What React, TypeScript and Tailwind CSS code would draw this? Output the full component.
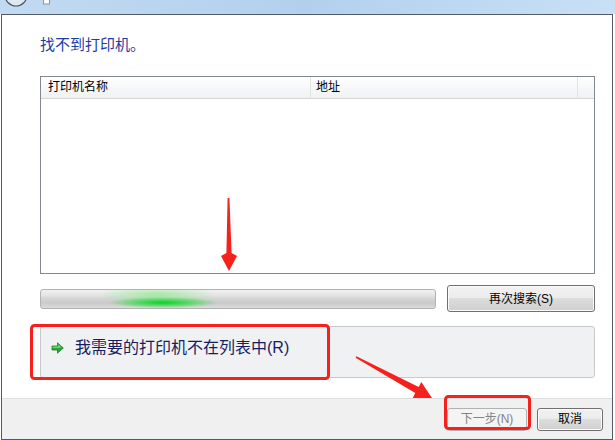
export default function App() {
  const btn =
    "rounded-[3px] border border-[#707070] bg-[linear-gradient(#f2f2f2_0%,#ebebeb_50%,#dddddd_50%,#cfcfcf_100%)] shadow-[inset_0_0_0_1px_#fbfbfb] text-[12px] leading-none text-black flex items-center justify-center";

  return (
    <div className="relative w-[615px] h-[440px] overflow-hidden bg-white font-['Liberation_Sans','Noto_Sans_CJK_SC',sans-serif]">
      {/* title bar */}
      <div className="relative h-[14px] bg-gradient-to-r from-[#c2daf1] via-[#b2d0ee] to-[#c8e0f6]">
        <svg className="absolute left-0 top-0" width="60" height="14" viewBox="0 0 60 14">
          <circle cx="16" cy="-5" r="11" fill="#dfe9f4" stroke="#4f5662" strokeWidth="1.2" />
          <rect x="43.5" y="-2" width="6" height="6" fill="#ffffff" stroke="#8a96a4" strokeWidth="1" />
        </svg>
      </div>

      {/* window */}
      <div className="ml-[1px] w-[612px] h-[426px] border border-[#525c68] flex flex-col">
        <div className="flex-1 bg-white pl-[38px] pr-[17px] pt-[20px]">
          <h1 className="text-[15px] leading-[20px] text-[#1c3ca4]">找不到打印机。</h1>

          {/* printer list */}
          <div className="mt-[21px] h-[198px] border border-[#828790] bg-white">
            <div className="flex h-[22px] border-b border-[#d5d5d5] bg-gradient-to-b from-white to-[#f0f1f3] text-[12px] leading-[21px] text-black">
              <div className="w-[270px] border-r border-[#e2e3e5] pl-[7px]">打印机名称</div>
              <div className="w-[267px] border-r border-[#e2e3e5] pl-[5px]">地址</div>
              <div className="flex-1" />
            </div>
          </div>

          {/* progress + search again */}
          <div className="mt-[11px] flex items-center h-[27px]">
            <div className="w-[396px] h-[20px] flex rounded-[3px] border border-[#b2b2b2] bg-[linear-gradient(#f1f1f1_0%,#e4e4e4_30%,#d6d6d6_45%,#cacaca_72%,#dcdcdc_100%)]">
              <div className="ml-[62px] w-[120px] h-full bg-[radial-gradient(ellipse_46%_32%_at_50%_70%,rgba(10,210,40,1)_0%,rgba(40,220,60,0.6)_55%,rgba(60,230,80,0)_100%),radial-gradient(ellipse_50%_50%_at_45%_25%,rgba(120,235,120,0.6)_0%,rgba(150,240,150,0)_100%)]" />
            </div>
            <button className={`ml-[11px] flex-1 h-[27px] ${btn}`}>再次搜索(S)</button>
          </div>

          {/* command link */}
          <div className="mt-[14px] h-[52px] rounded-[3px] border border-[#c6c8ca] bg-[#f0f1f2] flex items-start pl-[10px] pt-[10px]">
            <svg className="mt-[5px]" width="13" height="12" viewBox="0 0 13 12">
              <path d="M1 4 H6.5 V0.8 L12.3 6 L6.5 11.2 V8 H1 Z" fill="#2aa53a" stroke="#1b7f2a" strokeWidth="0.8" />
              <path d="M1.6 4.6 H7.1 V2.2 L10.8 5.6 L7.1 6 H1.6 Z" fill="#66d872" />
            </svg>
            <span className="ml-[11px] text-[16px] leading-[22px] text-[#161d60]">我需要的打印机不在列表中(R)</span>
          </div>
        </div>

        {/* footer */}
        <div className="h-[41px] border-t border-[#dfdfdf] bg-[#f0f0f0] flex items-center justify-end gap-[10px] pr-[9px]">
          <button className="w-[80px] h-[23px] rounded-[3px] border border-[#adb2b5] bg-[#f4f4f4] text-[12px] leading-none text-[#838383] flex items-center justify-center">
            下一步(N)
          </button>
          <button className={`w-[66px] h-[23px] ${btn}`}>取消</button>
        </div>
      </div>

      {/* red annotations */}
      <svg className="absolute left-0 top-0 pointer-events-none" width="615" height="440" viewBox="0 0 615 440">
        <polygon
          points="227.6,198 229.4,198 231.6,253 237,256 229,271 221,256 226.4,253"
          fill="#f5211c"
        />
        <polygon
          points="356.4,356.3 418.7,386.9 421.3,382.1 432,398 412.7,397.9 415.3,393.1 355.6,357.7"
          fill="#f5211c"
        />
        <rect x="31.5" y="325.5" width="297" height="53" rx="3" fill="none" stroke="#f5211c" strokeWidth="3" />
        <rect x="445.5" y="396.5" width="84" height="32" rx="3" fill="none" stroke="#f5211c" strokeWidth="3" />
      </svg>
    </div>
  );
}
